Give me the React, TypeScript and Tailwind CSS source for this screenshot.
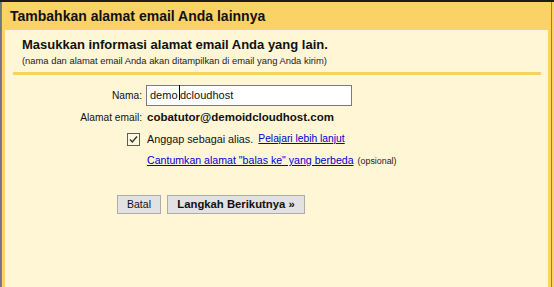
export default function App() {
  return (
    <div
      className="w-[554px] h-[287px] overflow-hidden flex flex-col bg-[#fad266]"
      style={{ fontFamily: '"Liberation Sans", Arial, sans-serif' }}
    >
      <div className="h-[2px] bg-[#1c1c1c] shrink-0" />
      <div className="flex flex-1 min-h-0">
        {/* window edge left */}
        <div className="w-px bg-[#6e7680]" />
        <div className="w-px bg-[#3d8ee0]" />

        <div className="flex-1 flex flex-col">
          <div className="h-[28px] flex items-center pl-[8px] shrink-0">
            <h1 className="text-[14px] font-bold text-[#111] leading-none">
              Tambahkan alamat email Anda lainnya
            </h1>
          </div>

          <div className="flex-1 ml-[3px] mr-[3px] bg-[#fff6d6] pt-[7px]">
            <div className="pl-[17px]">
              <p className="text-[13px] font-bold leading-[16px] text-[#111]">
                Masukkan informasi alamat email Anda yang lain.
              </p>
              <p className="text-[9.4px] leading-[12px] mt-[2px] text-[#222]">
                (nama dan alamat email Anda akan ditampilkan di email yang Anda kirim)
              </p>
            </div>
            <div className="h-[3px] bg-[#f8d064] ml-[8px] mr-[7px] mt-[5px]" />

            {/* form */}
            <div className="mt-[10px] flex items-center h-[21px]">
              <label className="w-[137px] text-right text-[10.2px] text-[#111]">Nama:</label>
              <div className="ml-[4px] w-[206px] h-[21px] border border-[#7a7a7a] bg-white flex items-center pl-[3px] text-[11px] text-[#111]">
                <span>demo</span>
                <span className="relative text-transparent">
                  i
                  <span className="absolute left-[1px] top-[-2px] h-[15px] w-px bg-black" />
                </span>
                <span>dcloudhost</span>
              </div>
            </div>

            <div className="mt-[4px] flex items-baseline leading-[14px]">
              <span className="w-[137px] text-right text-[10.2px] text-[#111]">Alamat email:</span>
              <span className="ml-[5px] text-[11.5px] font-bold text-[#111]">
                cobatutor@demoidcloudhost.com
              </span>
            </div>

            <div className="mt-[7px] flex items-center h-[14px] leading-[14px]">
              <div className="w-[135px] flex justify-end">
                <svg width="13" height="13" viewBox="0 0 13 13">
                  <rect x="0.5" y="0.5" width="12" height="12" fill="#fff8e0" stroke="#5c5c5c" />
                  <path d="M3 6.5 L5.3 9 L10 3.5" fill="none" stroke="#333" strokeWidth="1.4" />
                </svg>
              </div>
              <span className="ml-[7px] text-[10.8px] text-[#111]">Anggap sebagai alias.</span>
              <a href="#" className="ml-[5px] text-[10.3px] text-[#0000cc] underline">
                Pelajari lebih lanjut
              </a>
            </div>

            <div className="mt-[7px] flex items-baseline leading-[14px]">
              <a href="#" className="ml-[142px] text-[10.6px] text-[#0000cc] underline">
                Cantumkan alamat "balas ke" yang berbeda
              </a>
              <span className="ml-[4px] text-[8.9px] text-[#222]">(opsional)</span>
            </div>

            <div className="mt-[27px] ml-[112px] flex gap-[6px]">
              <button className="w-[44px] h-[19px] bg-[#e2e2e2] border border-[#acacac] text-[10.5px] text-[#111] leading-none">
                Batal
              </button>
              <button className="w-[138px] h-[19px] bg-[#e2e2e2] border border-[#acacac] text-[11.3px] font-bold text-[#111] leading-none">
                Langkah Berikutnya »
              </button>
            </div>
          </div>
        </div>

        {/* window edge right */}
        <div className="w-px bg-[#3d8ee0]" />
        <div className="w-[2px] bg-[#fad266]" />
      </div>
    </div>
  );
}
